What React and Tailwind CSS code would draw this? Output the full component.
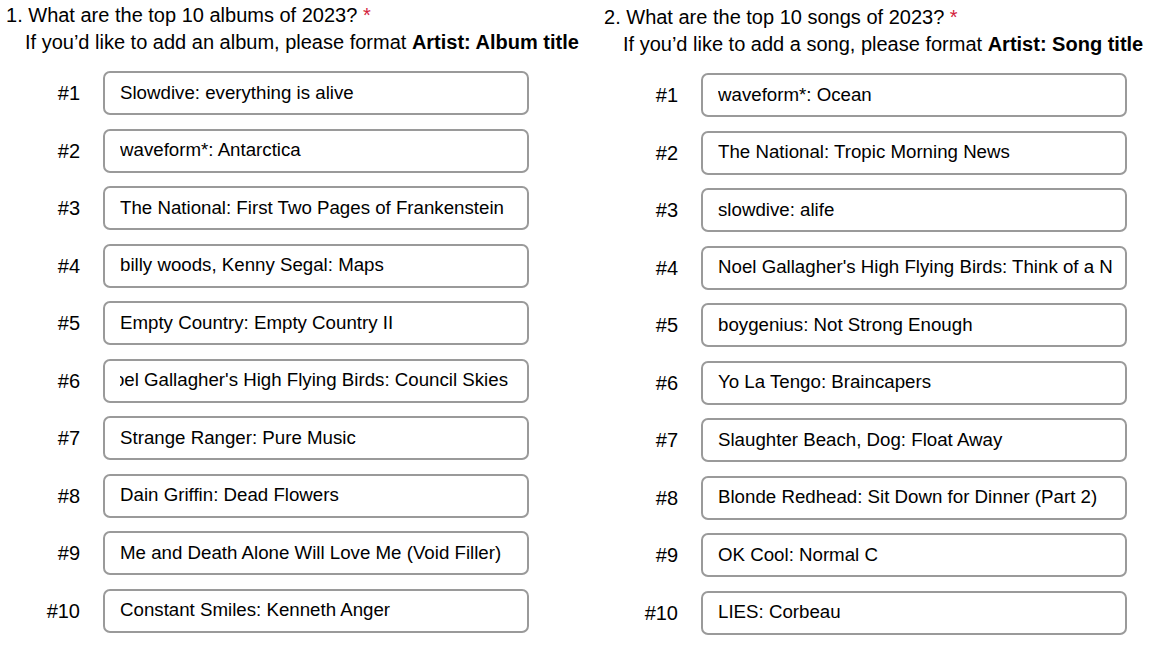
import React from "react";

const albums = [
    "Slowdive: everything is alive",
    "waveform*: Antarctica",
    "The National: First Two Pages of Frankenstein",
    "billy woods, Kenny Segal: Maps",
    "Empty Country: Empty Country II",
    "Noel Gallagher's High Flying Birds: Council Skies",
    "Strange Ranger: Pure Music",
    "Dain Griffin: Dead Flowers",
    "Me and Death Alone Will Love Me (Void Filler)",
    "Constant Smiles: Kenneth Anger",
];

const songs = [
    "waveform*: Ocean",
    "The National: Tropic Morning News",
    "slowdive: alife",
    "Noel Gallagher's High Flying Birds: Think of a New Feeling",
    "boygenius: Not Strong Enough",
    "Yo La Tengo: Braincapers",
    "Slaughter Beach, Dog: Float Away",
    "Blonde Redhead: Sit Down for Dinner (Part 2)",
    "OK Cool: Normal C",
    "LIES: Corbeau",
];

function Field({ value, scrolled }) {
    return (
        <div className="ml-[23px] w-[426px] h-[44px] border-2 border-[#9a9a9a] rounded-[7px] bg-white pl-[15px] pr-[13px] flex items-center text-[18.7px]">
            <div className={`w-full overflow-hidden whitespace-nowrap flex ${scrolled ? "justify-end" : "justify-start"}`}>
                <span className={`shrink-0 ${scrolled ? "pr-[6px]" : ""}`}>{value}</span>
            </div>
        </div>
    );
}

function Question({ num, title, hint, bold, items, scrolledIndex, className }) {
    return (
        <div className={className}>
            <div className="leading-[30px] pl-[6px]">
                {num}. {title} <span className="text-[#d3213c]">*</span>
            </div>
            <div className="leading-[24px] pl-[25px]">
                {hint} <span className="font-bold">{bold}</span>
            </div>
            <div className="mt-[17px] flex flex-col gap-[13.5px]">
                {items.map((item, i) => (
                    <div key={i} className="flex items-center">
                        <div className="w-[80px] text-right">#{i + 1}</div>
                        <Field value={item} scrolled={i === scrolledIndex} />
                    </div>
                ))}
            </div>
        </div>
    );
}

export default function App() {
    return (
        <div className="w-[1150px] h-[646px] bg-white text-black text-[20px] flex font-['Liberation_Sans',Arial,sans-serif] overflow-hidden">
            <Question
                className="w-[598px] shrink-0"
                num={1}
                title="What are the top 10 albums of 2023?"
                hint="If you’d like to add an album, please format"
                bold="Artist: Album title"
                items={albums}
                scrolledIndex={5}
            />
            <Question
                className="w-[552px] shrink-0 pt-[2px]"
                num={2}
                title="What are the top 10 songs of 2023?"
                hint="If you’d like to add a song, please format"
                bold="Artist: Song title"
                items={songs}
                scrolledIndex={-1}
            />
        </div>
    );
}
